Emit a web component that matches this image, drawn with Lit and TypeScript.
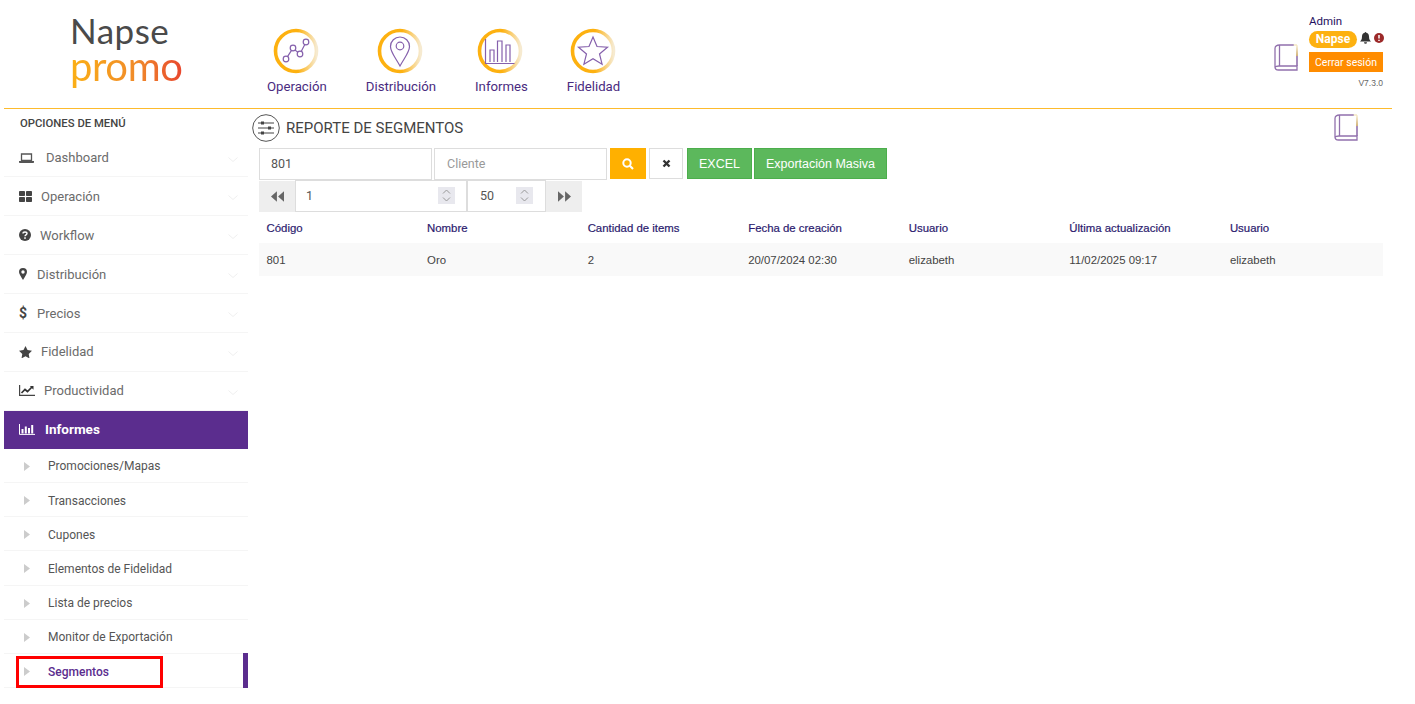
import { LitElement, html, css, svg } from 'lit';
import { customElement, state } from 'lit/decorators.js';

const ring = (body: unknown) => html`
  <svg class="ring" viewBox="0 0 46 46">
    <defs>
      <linearGradient id="rg" x1="0" y1="0" x2="1" y2="0">
        <stop offset="0.55" stop-color="#fdb110"></stop>
        <stop offset="1" stop-color="#f6ead0"></stop>
      </linearGradient>
    </defs>
    <circle cx="23" cy="23" r="20.5" fill="none" stroke="url(#rg)" stroke-width="3.6"></circle>
    <g fill="none" stroke="#8560ac" stroke-width="1.2">${body}</g>
  </svg>`;

const topNav = [
    { label: 'Operación', icon: svg`<circle cx="13" cy="31" r="2.8"/><circle cx="20" cy="20" r="2.8"/><circle cx="27" cy="26" r="2.8"/><circle cx="33" cy="14" r="2.8"/><path d="M14.5 28.6l4-6.2M22 22l3 2.4M28.2 23.5l3.6-7"/>` },
    { label: 'Distribución', icon: svg`<path d="M23 38C18 29 13.5 24 13.5 18.5a9.5 9.5 0 0 1 19 0C32.500 24 28 29 23 38z"/><circle cx="23" cy="18" r="3.8"/>` },
    { label: 'Informes', icon: svg`<path d="M8.500 11v24.500h29"/><path d="M13 34V22h4v12M20.500 34V13h4.500v21M29 34V17h4v17"/>` },
    { label: 'Fidelidad', icon: svg`<path d="M23 9l4 9.500 10.500.7-8 6.800 2.600 10.200L23 30.700 13.900 36.200 16.500 26l-8-6.800L19 18.500z"/>` },
];

const book = html`
  <svg class="book" viewBox="0 0 24 27">
    <defs>
      <linearGradient id="bk" gradientUnits="userSpaceOnUse" x1="0" y1="1" x2="0" y2="22">
        <stop offset="0" stop-color="#fbf3d8"></stop>
        <stop offset="0.5" stop-color="#c9a35c"></stop>
        <stop offset="0.55" stop-color="#9170ad"></stop>
      </linearGradient>
    </defs>
    <path d="M20 1H5.500C3 1 1 2 1 4.500V23c0 2 1.500 3 3.500 3H23v-4H5c-2 0-4 .3-4 2" fill="none" stroke="#9170ad" stroke-width="1.300"></path>
    <path d="M5.500 1v21" fill="none" stroke="#9170ad" stroke-width="1.300"></path>
    <path d="M23 1v21" fill="none" stroke="url(#bk)" stroke-width="1.600"></path>
    <path d="M19.500 1H23" fill="none" stroke="#f3e4bd" stroke-width="1.300"></path>
  </svg>`;

const sideIcons: Record<string, unknown> = {
    laptop: svg`<svg viewBox="0 0 15 10" width="15" height="10"><path d="M2.500 1h10v6.500h-10z" fill="none" stroke="#555" stroke-width="1.300"/><path d="M0 8h15v1.200a.8.8 0 0 1-.8.8H.8a.8.8 0 0 1-.8-.8z" fill="#555"/></svg>`,
    grid: svg`<svg viewBox="0 0 13 11" width="13" height="11"><g fill="#444"><rect width="6" height="5" rx=".8"/><rect x="7" width="6" height="5" rx=".8"/><rect y="6" width="6" height="5" rx=".8"/><rect x="7" y="6" width="6" height="5" rx=".8"/></g></svg>`,
    help: svg`<svg viewBox="0 0 12 12" width="12" height="12"><circle cx="6" cy="6" r="6" fill="#444"/><path d="M4 4.600C4 3.500 5 3 6 3s2 .6 2 1.600c0 1.400-2 1.300-2 2.700" fill="none" stroke="#fff" stroke-width="1.400"/><rect x="5.200" y="8.300" width="1.600" height="1.500" fill="#fff"/></svg>`,
    marker: svg`<svg viewBox="0 0 8 12" width="8" height="12"><path fill-rule="evenodd" d="M4 0a4 4 0 0 1 4 4c0 2-2.500 5.500-4 8C2.500 9.500 0 6 0 4a4 4 0 0 1 4-4zm0 2.300a1.700 1.700 0 1 0 0 3.400 1.700 1.700 0 0 0 0-3.400z" fill="#444"/></svg>`,
    star: svg`<svg viewBox="0 0 13 12" width="13" height="12"><path d="M6.500 0l2 4.100 4.500.6-3.300 3.200.8 4.500-4-2.100-4 2.100.8-4.500L0 4.700l4.500-.6z" fill="#444"/></svg>`,
    chart: svg`<svg viewBox="0 0 16 11" width="16" height="11"><path d="M.6 0v10.300H16" fill="none" stroke="#444" stroke-width="1.200"/><path d="M2.500 8l3.500-3.500 2.500 2L13 2" fill="none" stroke="#333" stroke-width="1.700"/><path d="M10.800 1H14.500v3.700z" fill="#333"/></svg>`,
    bars: svg`<svg viewBox="0 0 16 11" width="16" height="11"><path d="M.5 0v10.400H16" fill="none" stroke="#fff"/><g fill="#fff"><rect x="2.500" y="5" width="2" height="4.500"/><rect x="5.800" y="2.500" width="2" height="7"/><rect x="9" y="4" width="2" height="5.500"/><rect x="12.200" y="1" width="2" height="8.500"/></g></svg>`,
};

const chevron = html`<svg class="chev" viewBox="0 0 10 5"><path d="M.5.500L5 4.500 9.500.500" fill="none" stroke="#efefef"></path></svg>`;
const caret = html`<svg class="caret" viewBox="0 0 6 9"><path d="M0 0l6 4.500L0 9z" fill="#ccc"></path></svg>`;

@customElement('app-root')
export class AppRoot extends LitElement {
    @state() menu = [
        { label: 'Dashboard', icon: 'laptop', textX: 46 },
        { label: 'Operación', icon: 'grid', textX: 41 },
        { label: 'Workflow', icon: 'help', textX: 40 },
        { label: 'Distribución', icon: 'marker', textX: 37 },
        { label: 'Precios', icon: 'dollar', textX: 37 },
        { label: 'Fidelidad', icon: 'star', textX: 41 },
        { label: 'Productividad', icon: 'chart', textX: 44 },
    ];
    @state() subMenu = ['Promociones/Mapas', 'Transacciones', 'Cupones', 'Elementos de Fidelidad', 'Lista de precios', 'Monitor de Exportación', 'Segmentos'];
    @state() columns = ['Código', 'Nombre', 'Cantidad de items', 'Fecha de creación', 'Usuario', 'Última actualización', 'Usuario'];
    @state() rows = [['801', 'Oro', '2', '20/07/2024 02:30', 'elizabeth', '11/02/2025 09:17', 'elizabeth']];

    static styles = css`
    :host { display: block; width: 1415px; height: 704px; background: #fff; overflow: hidden; font-family: Roboto, sans-serif; color: #555; }
    .page { margin: 0 23px 0 4px; }
    header { display: flex; height: 108px; border-bottom: 1px solid #fdbb2d; }
    .logo { width: 197px; padding: 13px 0 0 66px; line-height: 1; font-family: Lato, sans-serif; font-weight: 400; }
    .logo div:first-child { font-size: 35px; color: #4a4a4a; height: 35px; letter-spacing: 0.5px; }
    .logo div:last-child { font-size: 40px; height: 44px; margin-top: -2px; width: fit-content; letter-spacing: -0.4px; background: linear-gradient(90deg, #fbb015, #f08a2a 60%, #e8472e); -webkit-background-clip: text; background-clip: text; color: transparent; }
    .topnav { display: flex; gap: 39px; flex: 1; }
    .topnav a { display: flex; flex-direction: column; align-items: center; color: #4a2b7f; font-size: 13.200px; padding-top: 28px; }
    .ring { width: 46px; height: 46px; position: relative; left: -1px; }
    .topnav span { margin-top: 5px; line-height: 16px; }
    .book { width: 24px; height: 27px; }
    .account { display: flex; padding-right: 8px; }
    .account .book { margin: 44px 11px 0 0; }
    .who { width: 75px; padding-top: 14px; font-size: 11.500px; }
    .who .name { color: #1f1060; line-height: 14px; height: 16px; }
    .who .status { display: flex; align-items: center; gap: 3px; height: 18px; }
    .who .status svg { margin-bottom: 3px; }
    .pill { background: #fdb110; color: #fff; font-weight: 700; font-size: 12px; width: 48px; height: 17px; line-height: 17px; border-radius: 9px; text-align: center; }
    .who button { display: block; width: 74px; height: 20px; margin-top: 4px; border: 0; padding: 0; background: #ff8c00; color: #fff; font: 10.500px Roboto, sans-serif; }
    .version { font: 8.500px 'Liberation Sans', sans-serif; color: #666; text-align: right; margin-top: 6px; width: 74px; }
    .body { display: flex; }
    nav.side { width: 244px; flex: none; }
    .side h4 { margin: 0; font-size: 11.300px; font-weight: 500; color: #444; padding: 8px 0 0 16px; height: 21.600px; line-height: 13px; }
    .item { display: flex; align-items: center; height: 37.900px; border-bottom: 1px solid #f5f5f5; padding-left: 15px; font-size: 13px; color: #6b6b6b; position: relative; }
    .ico { display: flex; align-items: center; flex: none; }
    .dollar { font-weight: 700; font-size: 14px; color: #444; }
    .chev { width: 10px; height: 5px; position: absolute; right: 10px; top: 18px; }
    .item.active { background: #5b2d8e; color: #fff; font-weight: 700; font-size: 13.500px; border-bottom: 0; height: 37.100px; padding-bottom: 1px; }
    .sub { display: flex; align-items: center; height: 31.400px; padding-top: 1.800px; border-bottom: 1px solid #f5f5f5; padding-left: 20px; font-size: 12px; color: #555; position: relative; }
    .caret { width: 6px; height: 9px; margin-right: 18px; flex: none; }
    .sub.current { color: #5b2d8e; font-weight: 500; }
    .sub.current::after { content: ''; position: absolute; right: 0; top: -1px; bottom: -1px; width: 5px; background: #5b2d8e; }
    .redbox { position: absolute; left: 16px; top: 656px; width: 147px; height: 32px; border: 3px solid #f00; box-sizing: border-box; }
    main { flex: 1; padding: 0 9px 0 11px; min-width: 0; }
    .title { display: flex; align-items: center; height: 39px; position: relative; margin-left: -7px; font-size: 15px; color: #444; gap: 6px; padding-bottom: 1px; box-sizing: border-box; }
    .title .book { position: absolute; right: 25px; top: 5px; }
    .tune { width: 28px; height: 28px; }
    .row { display: flex; align-items: flex-start; }
    .field { box-sizing: border-box; width: 173px; height: 32px; border: 1px solid #ddd; padding: 0 11px 2px; font: 12.500px Roboto, sans-serif; color: #555; outline: none; background: #fff; }
    .field + .field { margin-left: 2px; padding-left: 12px; }
    .field::placeholder { color: #999; }
    button.act { box-sizing: border-box; height: 31px; border: 1px solid transparent; padding: 0; display: flex; align-items: center; justify-content: center; font: 12.500px 'Liberation Sans', sans-serif; }
    .find { width: 36px; background: #ffb000; margin-left: 3px; }
    .clear { width: 34px; background: #fff; border-color: #ddd !important; margin-left: 3px; }
    .green { background: #5cb85c; color: #fff; border-color: #4cae4c !important; }
    .excel { width: 65px; margin-left: 4px; }
    .massive { width: 133px; margin-left: 2px; }
    .pager { height: 32px; }
    .step { box-sizing: border-box; width: 36px; height: 31px; margin-top: 1px; background: #eee; border: 0; padding: 0; display: flex; align-items: center; justify-content: center; }
    .num { box-sizing: border-box; height: 32px; border: 1px solid #ddd; padding-bottom: 1px; display: flex; align-items: center; justify-content: space-between; font-size: 12.500px; color: #555; background: #fff; }
    .num.page-no { width: 172px; padding-left: 10px; padding-right: 11px; }
    .num.size { width: 79px; padding-left: 12px; padding-right: 12px; }
    .spin { width: 17px; height: 17px; background: #e8e8ee; display: block; }
    table { width: 100%; border-collapse: collapse; table-layout: fixed; font: 11.400px 'Liberation Sans', sans-serif; }
    th { text-align: left; font-weight: 400; color: #2b1a6e; height: 31px; padding: 0 7.500px; -webkit-text-stroke: .2px #2b1a6e; }
    td { height: 33px; padding: 0 7.500px; color: #444; background: #f9f9f9; }
  `;

    renderSpin() {
        return html`<svg class="spin" viewBox="0 0 17 17"><path d="M5 6.500l3.500-3.500L12 6.500M5 10.500l3.500 3.500L12 10.500" fill="none" stroke="#999"></path></svg>`;
    }

    render() {
        return html`
      <div class="page">
        <header>
          <div class="logo"><div>Napse</div><div>promo</div></div>
          <div class="topnav">
            ${topNav.map(n => html`<a>${ring(n.icon)}<span>${n.label}</span></a>`)}
          </div>
          <div class="account">
            ${book}
            <div class="who">
              <div class="name">Admin</div>
              <div class="status">
                <div class="pill">Napse</div>
                <svg viewBox="0 0 11 12" width="11" height="12"><path d="M5.500 0c.5 0 .8.300.8.800C8.200 1.200 9 2.800 9 4.500 9 7.500 10 8.500 11 9.500H0C1 8.500 2 7.500 2 4.500 2 2.800 2.800 1.200 4.700.8c0-.5.300-.8.800-.8zM4 10.300h3a1.500 1.500 0 0 1-3 0z" fill="#333"></path></svg>
                <svg viewBox="0 0 10 10" width="10" height="10"><circle cx="5" cy="5" r="5" fill="#9c2a2a"></circle><path d="M5 2v3.600M5 6.700v1.300" stroke="#fff" stroke-width="1.500"></path></svg>
              </div>
              <button>Cerrar sesión</button>
              <div class="version">V7.3.0</div>
            </div>
          </div>
        </header>
        <div class="body">
          <nav class="side">
            <h4>OPCIONES DE MENÚ</h4>
            ${this.menu.map(m => html`
              <div class="item">
                <span class="ico" style="width:${m.textX - 19}px">${m.icon === 'dollar' ? html`<span class="dollar">$</span>` : sideIcons[m.icon]}</span>
                ${m.label}${chevron}
              </div>`)}
            <div class="item active"><span class="ico" style="width:26px">${sideIcons.bars}</span>Informes</div>
            ${this.subMenu.map((s, i) => html`
              <div class="sub ${i === this.subMenu.length - 1 ? 'current' : ''}">${caret}${s}</div>`)}
          </nav>
          <main>
            <div class="title">
              <svg class="tune" viewBox="0 0 28 28">
                <circle cx="14" cy="14" r="13.300" fill="none" stroke="#555" stroke-width="1"></circle>
                <path d="M6 9h16M6 14h16M6 19h16" stroke="#444" stroke-width="1.200"></path>
                <path d="M9 7.500h3v3H9zM16 12.500h3v3h-3zM9 17.500h3v3H9z" fill="#444"></path>
              </svg>
              REPORTE DE SEGMENTOS
              ${book}
            </div>
            <div class="row">
              <input class="field" .value=${'801'} />
              <input class="field" placeholder="Cliente" />
              <button class="act find"><svg viewBox="0 0 12 12" width="12" height="12"><circle cx="5" cy="5" r="3.700" fill="none" stroke="#fff" stroke-width="2"></circle><path d="M7.800 7.800L11 11" stroke="#fff" stroke-width="2.200"></path></svg></button>
              <button class="act clear"><svg viewBox="0 0 9 9" width="9" height="9"><path d="M1.500 1.500l6 6M7.500 1.500l-6 6" stroke="#333" stroke-width="2.400"></path></svg></button>
              <button class="act green excel">EXCEL</button>
              <button class="act green massive">Exportación Masiva</button>
            </div>
            <div class="row pager">
              <button class="step"><svg viewBox="0 0 11 9" width="13" height="11"><path d="M5 0v9L0 4.500zM11 0v9L6 4.500z" fill="#666"></path></svg></button>
              <div class="num page-no">1 ${this.renderSpin()}</div>
              <div class="num size">50 ${this.renderSpin()}</div>
              <button class="step"><svg viewBox="0 0 11 9" width="13" height="11"><path d="M0 0v9l5-4.500zM6 0v9l5-4.500z" fill="#666"></path></svg></button>
            </div>
            <table>
              <thead><tr>${this.columns.map(c => html`<th>${c}</th>`)}</tr></thead>
              <tbody>${this.rows.map(r => html`<tr>${r.map(c => html`<td>${c}</td>`)}</tr>`)}</tbody>
            </table>
          </main>
        </div>
        <div class="redbox"></div>
      </div>
    `;
    }
}
